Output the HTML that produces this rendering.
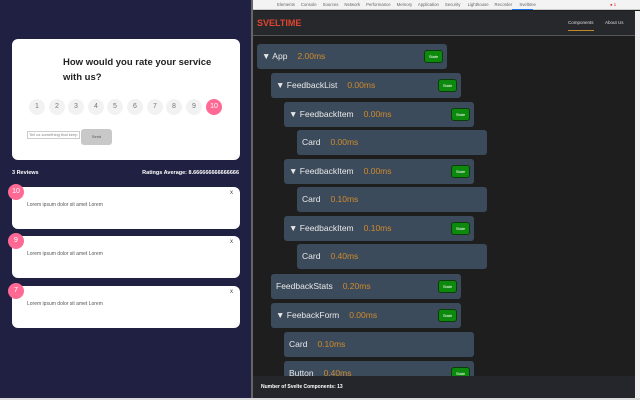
<!DOCTYPE html><html><head><style>
*{margin:0;padding:0;box-sizing:border-box}
body{width:640px;height:400px;overflow:hidden;background:#1e1e1e;font-family:"Liberation Sans",sans-serif;position:relative}
.abs{position:absolute}
#left{left:0;top:0;width:251px;height:398px;background:#202142}
.card{position:absolute;left:12px;width:228px;background:#fff;border-radius:6px}
.num{position:absolute;top:99px;width:16px;height:16px;border-radius:50%;background:#f2f2f2;color:#777;font-size:7px;text-align:center;line-height:16px}
.badge{position:absolute;left:8px;width:16px;height:16px;border-radius:50%;background:#ff6a95;color:#fff;font-size:7px;text-align:center;line-height:16px}
.lorem{position:absolute;left:15px;font-size:5px;color:#555}
.x{position:absolute;right:7px;font-size:6px;color:#444}
.row{position:absolute;height:25px;background:#3c4b5c;border-radius:3px;color:#e8e8e8;font-size:8.5px;line-height:25px;padding-left:5px}
.row .t{color:#d08a2a;margin-left:10px}
.st{position:absolute;right:4px;top:6px;width:19px;height:13px;background:#0d8a0d;border:1px solid #0a3d0a;border-radius:3px;color:#fff;font-size:4px;line-height:11px;text-align:center}
</style></head><body>
<div id="left" class="abs">
 <div class="card" style="top:39px;height:121px">
  <div class="abs" style="left:51px;top:16px;font-size:9.5px;font-weight:bold;color:#222;line-height:15px">How would you rate your service<br>with us?</div>
  <div class="num" style="left:17px;top:60px">1</div><div class="num" style="left:37px;top:60px">2</div><div class="num" style="left:56px;top:60px">3</div><div class="num" style="left:76px;top:60px">4</div><div class="num" style="left:95px;top:60px">5</div><div class="num" style="left:115px;top:60px">6</div><div class="num" style="left:135px;top:60px">7</div><div class="num" style="left:154px;top:60px">8</div><div class="num" style="left:174px;top:60px">9</div><div class="num" style="left:194px;top:60px;background:#ff6a95;color:#fff">10</div>
  <div class="abs" style="left:15px;top:92px;width:53px;height:8px;border:1px solid #ccc;font-size:4px;color:#888;line-height:6px;padding-left:1px;overflow:hidden;white-space:nowrap">Tell us something that keep</div>
  <div class="abs" style="left:69px;top:90px;width:31px;height:16px;background:#c8c8c8;border-radius:3px;font-size:4px;color:#555;text-align:center;line-height:16px">Send</div>
 </div>
 <div class="abs" style="left:12px;top:170px;font-size:5.5px;font-weight:bold;color:#fff">3 Reviews</div>
 <div class="abs" style="right:12px;top:170px;font-size:5.5px;font-weight:bold;color:#fff">Ratings Average: 8.666666666666666</div>
 <div class="card" style="top:187px;height:42px"><div class="x" style="top:3px">x</div><div class="lorem" style="top:15px">Lorem ipsum dolor sit amet Lorem</div></div>
 <div class="badge" style="top:184px">10</div>
 <div class="card" style="top:236px;height:42px"><div class="x" style="top:3px">x</div><div class="lorem" style="top:15px">Lorem ipsum dolor sit amet Lorem</div></div>
 <div class="badge" style="top:233px">9</div>
 <div class="card" style="top:286px;height:42px"><div class="x" style="top:3px">x</div><div class="lorem" style="top:15px">Lorem ipsum dolor sit amet Lorem</div></div>
 <div class="badge" style="top:283px">7</div>
</div>
<div class="abs" style="left:0;top:398px;width:640px;height:2px;background:#ddd"></div>
<div class="abs" style="left:251px;top:0;width:2px;height:398px;background:#666"></div>
<div class="abs" style="left:253px;top:0;width:387px;height:10px;background:#f3f3f3;border-bottom:1px solid #ccc;font-size:4.3px;color:#666;line-height:10px;white-space:nowrap">
 <span style="margin-left:24px">Elements &nbsp;&nbsp;&nbsp; Console &nbsp;&nbsp;&nbsp; Sources &nbsp;&nbsp;&nbsp; Network &nbsp;&nbsp;&nbsp; Performance &nbsp;&nbsp;&nbsp; Memory &nbsp;&nbsp;&nbsp; Application &nbsp;&nbsp;&nbsp; Security &nbsp;&nbsp;&nbsp;&nbsp; Lighthouse &nbsp;&nbsp;&nbsp; Recorder &nbsp;&nbsp;&nbsp;&nbsp; Sveltime</span>
 <span class="abs" style="left:357px;top:0;color:#d33">● 1</span>
</div>
<div class="abs" style="left:512px;top:9px;width:21px;height:1px;background:#1a73e8"></div>
<div class="abs" style="left:253px;top:11px;width:382px;height:25px;background:#27282c;border-bottom:1px solid #555">
 <div class="abs" style="left:4px;top:7px;color:#e0452e;font-weight:bold;font-size:9px">SVELTIME</div>
 <div class="abs" style="left:315px;top:9px;color:#ddd;font-size:4.5px">Components</div>
 <div class="abs" style="left:315px;top:19px;width:26px;height:1px;background:#c08a2a"></div>
 <div class="abs" style="left:352px;top:9px;color:#ddd;font-size:4.5px">About Us</div>
</div>
<div class="abs" style="left:635px;top:11px;width:5px;height:387px;background:#f0f0f0"></div>
<div class="row" style="left:257px;top:44px;width:190px">▼ App<span class="t">2.00ms</span><div class="st">State</div></div>
<div class="row" style="left:271px;top:73px;width:190px">▼ FeedbackList<span class="t">0.00ms</span><div class="st">State</div></div>
<div class="row" style="left:284px;top:102px;width:190px">▼ FeedbackItem<span class="t">0.00ms</span><div class="st">State</div></div>
<div class="row" style="left:297px;top:130px;width:190px">Card<span class="t">0.00ms</span></div>
<div class="row" style="left:284px;top:159px;width:190px">▼ FeedbackItem<span class="t">0.00ms</span><div class="st">State</div></div>
<div class="row" style="left:297px;top:187px;width:190px">Card<span class="t">0.10ms</span></div>
<div class="row" style="left:284px;top:216px;width:190px">▼ FeedbackItem<span class="t">0.10ms</span><div class="st">State</div></div>
<div class="row" style="left:297px;top:244px;width:190px">Card<span class="t">0.40ms</span></div>
<div class="row" style="left:271px;top:274px;width:190px">FeedbackStats<span class="t">0.20ms</span><div class="st">State</div></div>
<div class="row" style="left:271px;top:303px;width:190px">▼ FeebackForm<span class="t">0.00ms</span><div class="st">State</div></div>
<div class="row" style="left:284px;top:332px;width:190px">Card<span class="t">0.10ms</span></div>
<div class="row" style="left:284px;top:361px;width:190px">Button<span class="t">0.40ms</span><div class="st">State</div></div>
<div class="abs" style="left:253px;top:376px;width:382px;height:22px;background:#25262b;color:#fff;font-size:5px;font-weight:bold;line-height:22px;padding-left:8px">Number of Svelte Components: 13</div>
</body></html>
